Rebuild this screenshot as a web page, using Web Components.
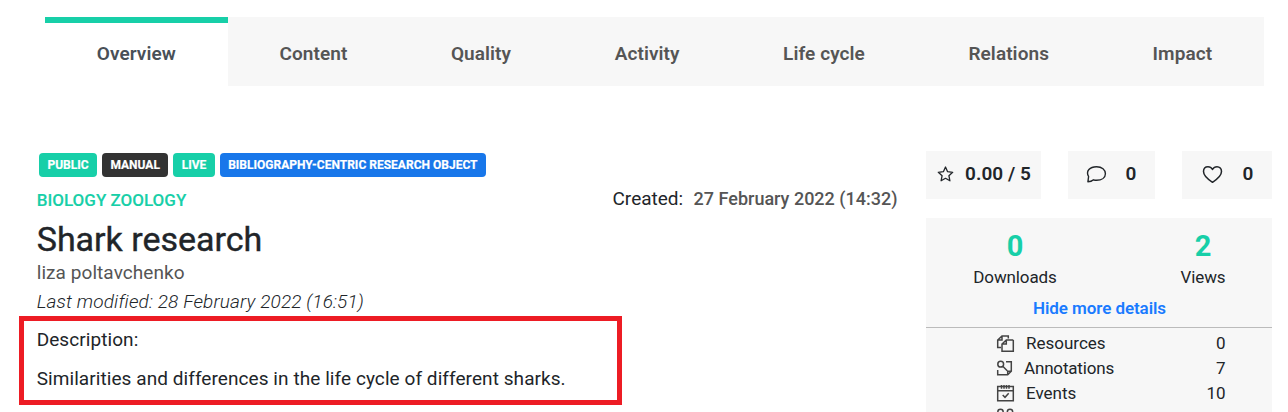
<!DOCTYPE html>
<html lang="en">
<head>
<meta charset="utf-8">
<title>Shark research</title>
<style>
html,body{margin:0;height:412px;overflow:hidden;background:#fff}
body{font-family:Roboto,sans-serif;color:#212529}
</style>
</head>
<body>
<research-page></research-page>
<script>
const define=(name,html)=>customElements.define(name,class extends HTMLElement{
  constructor(){
    super();
    this.attachShadow({mode:'open'}).innerHTML=html;
  }
});

define('nav-tab',`<style>
:host{display:flex;flex:1 1 auto;justify-content:center;box-sizing:border-box;height:69px;padding-top:6px;border-top:6px solid #f7f7f7;background:#f7f7f7;color:#555;font-weight:600;font-size:19px;line-height:49px;letter-spacing:.08px}
:host([active]){background:#fff;border-top-color:#17cfa8;color:#495057}
</style><slot></slot>`);

define('tab-bar',`<style>
:host{display:flex;margin:0 24px 0 45px}
</style><slot></slot>`);

define('tag-badge',`<style>
:host{display:block;box-sizing:border-box;height:24px;padding:0 8.4px;border-radius:4px;background:#17cfa8;color:#fff;font-weight:700;font-size:12px;line-height:24px;letter-spacing:.01px;white-space:nowrap;-webkit-text-stroke:.2px}
:host([dark]){background:#333}
:host([blue]){background:#1877ea}
</style><slot></slot>`);

define('created-date',`<style>
:host{display:flex;justify-content:space-between;width:285px;margin-right:.5px;font-size:19px;line-height:26px;white-space:nowrap}
b{font-weight:500;font-size:18px;color:#555}
</style><span>Created:</span><b><slot></slot></b>`);

define('description-box',`<style>
:host{display:block;box-sizing:border-box;width:603px;height:89px;margin:1px 0 0 -17px;border:5px solid #ed1c24;padding:6px 12.7px 0;font-size:19px;line-height:26px;letter-spacing:.07px;white-space:nowrap}
p{margin:13px 0 0}
</style><div>Description:</div><p><slot></slot></p>`);

define('object-header',`<style>
:host{display:block;width:862px}
.tags{display:flex;gap:5px;padding-left:3px}
.row{display:flex;justify-content:space-between;height:42px}
.topic{margin-top:11px;font-weight:500;font-size:17px;line-height:24px;color:#17cfa8;-webkit-text-stroke:.15px}
.topic,h1,.by,.mod{padding-left:.7px}
created-date{margin-top:9px}
h1{margin:0;font-weight:400;font-size:34px;line-height:40px;-webkit-text-stroke:.4px}
.by{font-size:19px;line-height:26px;color:#555;letter-spacing:.07px;margin-top:1px}
.mod{font-size:19px;line-height:26px;font-style:italic;font-weight:300;letter-spacing:.13px;margin-top:3px}
</style>
<div class="tags"><tag-badge>PUBLIC</tag-badge><tag-badge dark>MANUAL</tag-badge><tag-badge>LIVE</tag-badge><tag-badge blue>BIBLIOGRAPHY-CENTRIC RESEARCH OBJECT</tag-badge></div>
<div class="row"><div class="topic">BIOLOGY ZOOLOGY</div><created-date>27 February 2022 (14:32)</created-date></div>
<h1>Shark research</h1>
<div class="by">liza poltavchenko</div>
<div class="mod">Last modified: 28 February 2022 (16:51)</div>
<description-box>Similarities and differences in the life cycle of different sharks.</description-box>`);

define('rating-card',`<style>
:host{display:flex;box-sizing:border-box;justify-content:space-between;height:48px;background:#f7f7f7;font-weight:600;font-size:19px;line-height:45px;letter-spacing:.05px}
::slotted(svg){display:block;fill:none;stroke:#212529}
</style><slot name="icon"></slot><span><slot></slot></span>`);

define('stat-count',`<style>
:host{display:flex;flex-direction:column;align-items:center;width:100px}
b{font-size:29px;font-weight:700;line-height:36px;color:#17cfa8}
span{font-size:17px;line-height:24px;letter-spacing:-.12px;margin-top:1px}
b span{font-size:inherit;line-height:inherit}
</style><b><slot name="value"></slot></b><span><slot></slot></span>`);

define('detail-row',`<style>
:host{display:grid;grid-template-columns:30px 1fr auto;height:25px;padding:0 46.5px 0 70px;font-size:17px;line-height:25px}
::slotted(svg){display:block;margin-top:2px;fill:none;stroke:#444;stroke-width:1.5}
</style><slot name="icon"></slot><span><slot></slot></span><span><slot name="value"></slot></span>`);

define('stats-panel',`<style>
:host{display:block;box-sizing:border-box;height:194px;padding-top:10px;background:#f7f7f7;overflow:hidden}
.counts{display:flex;gap:88px;padding-left:39px}
.toggle{text-align:center;font-weight:600;font-size:17px;line-height:24px;color:#1a7bff;margin-top:7px;letter-spacing:-.07px;padding-left:1px}
.rows{margin-top:7px;border-top:1px solid #bbb;padding-top:3px}
</style>
<div class="counts"><stat-count><span slot="value">0</span>Downloads</stat-count><stat-count><span slot="value">2</span>Views</stat-count></div>
<div class="toggle">Hide more details</div>
<div class="rows">
<detail-row><svg slot="icon" width="19" height="20" viewBox="0 0 19 20"><path d="M5 14.5H1.7V7L6 3H12.3V5.5M6 3V7H1.7M17.3 7V18.3H6V11L10.3 7H17.3M10.3 7V11H6"/></svg>Resources<span slot="value">0</span></detail-row>
<detail-row><svg slot="icon" width="19" height="20" viewBox="0 0 19 20"><circle cx="4.7" cy="6.2" r="2.9"/><path d="M6.8 8.3L11.2 12.8M10 3.7H15.3V13.3L11.7 16.8H1.7V12M11.7 16.8V13.3H15.3"/></svg><span style="margin-left:-2px;letter-spacing:-.17px">Annotations</span><span slot="value">7</span></detail-row>
<detail-row><svg slot="icon" width="19" height="20" viewBox="0 0 19 20"><path d="M1.7 3.6H17.3V17.8H1.7ZM1.7 7.7H17.3M5.5 2V5.7M8 2V5.7M10.5 2V5.7M13 2V5.7M6.7 12L9 14.3L12.7 10.3"/></svg>Events<span slot="value">10</span></detail-row>
<detail-row><svg slot="icon" width="19" height="20" viewBox="0 0 19 20"><circle cx="4.5" cy="4" r="2.7"/><circle cx="14" cy="4" r="2.7"/><path d="M4.5 6.7V10H14V6.7M9.3 10V14"/></svg>Forks</detail-row>
</div>`);

define('stats-sidebar',`<style>
:host{display:block;width:346px;margin-top:-2px}
.cards{display:flex;gap:27px;margin-bottom:19px}
</style>
<div class="cards">
<rating-card style="width:115px;padding:0 10px 0 11px"><svg slot="icon" width="17" height="17" viewBox="0 0 17 17" style="margin-top:15px"><path stroke-width="1.3" stroke-linejoin="round" d="M8.5 1L10.6 5.7L15.7 6.3L11.9 9.7L12.9 14.8L8.5 12.3L4.1 14.8L5.1 9.7L1.3 6.3L6.4 5.7Z"/></svg>0.00 / 5</rating-card>
<rating-card style="width:87px;padding:0 18.5px 0 18px"><svg slot="icon" width="21" height="20" viewBox="0 0 21 20" style="margin-top:14px"><path stroke-width="1.4" stroke-linejoin="round" d="M1.9 16.8L2.6 11.5C-.6 6 4 1.7 10.5 1.7C16 1.7 19.4 4.7 19.4 8.7C19.4 12.8 15.7 15.3 10.5 15.3C9.4 15.3 8.4 15.1 7.5 14.8C6 16.2 4.2 16.8 1.9 16.8Z"/></svg>0</rating-card>
<rating-card style="width:90px;padding:0 18.5px 0 20px"><svg slot="icon" width="21" height="20" viewBox="0 0 21 20" style="margin-top:14px"><path stroke-width="1.5" stroke-linejoin="round" d="M10.5 4.5C9.3 2.4 7.8 1.7 6 1.7C3.3 1.7 1.5 3.7 1.5 6.6C1.5 10.5 5.6 14.2 10.5 17.3C15.4 14.2 19.5 10.5 19.5 6.6C19.5 3.7 17.7 1.7 15 1.7C13.2 1.7 11.7 2.4 10.5 4.5Z"/></svg>0</rating-card>
</div>
<stats-panel></stats-panel>`);

define('research-page',`<style>
:host{display:block;height:412px;overflow:hidden;padding-top:17px;box-sizing:border-box}
main{display:flex;justify-content:space-between;margin-top:67px;padding:0 16px 0 36px}
</style>
<tab-bar><nav-tab active>Overview</nav-tab><nav-tab>Content</nav-tab><nav-tab>Quality</nav-tab><nav-tab>Activity</nav-tab><nav-tab>Life cycle</nav-tab><nav-tab>Relations</nav-tab><nav-tab>Impact</nav-tab></tab-bar>
<main><object-header></object-header><stats-sidebar></stats-sidebar></main>`);
</script>
</body>
</html>
